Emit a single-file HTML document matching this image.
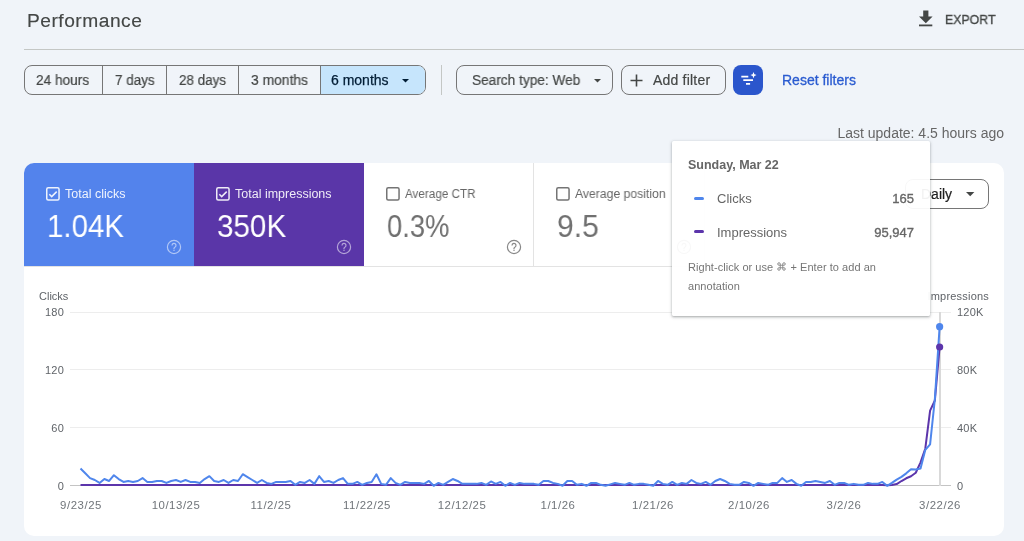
<!DOCTYPE html>
<html><head><meta charset="utf-8"><style>
html,body{margin:0;padding:0;}
body{width:1024px;height:541px;overflow:hidden;position:relative;background:#f0f4f9;font-family:"Liberation Sans", sans-serif;}
.t{position:absolute;white-space:nowrap;font-family:"Liberation Sans", sans-serif;will-change:transform;}
svg{overflow:visible}
</style></head><body>
<div class="t" style="left:27.30px;top:11.05px;font-size:19.2px;line-height:19.2px;color:#444746;font-weight:400;letter-spacing:0.5px;-webkit-text-stroke:0.15px #444746;">Performance</div>
<svg style="position:absolute;left:915px;top:6px" width="22" height="24" viewBox="0 0 22 24"><path d="M8.2 4.4h5.2v6.2h4.2L10.8 17.2 4.0 10.6h4.2z" fill="#444746"/><rect x="4" y="18.5" width="13.3" height="1.8" fill="#444746"/></svg>
<div class="t" style="left:944.50px;top:12.80px;font-size:13px;line-height:13px;color:#444746;font-weight:400;letter-spacing:0.1px;-webkit-text-stroke:0.35px #444746;transform:scaleX(0.94);transform-origin:0 0;">EXPORT</div>
<div style="position:absolute;left:24.00px;top:48.50px;width:1000.00px;height:1.00px;background:#c4c7c5"></div>
<div style="position:absolute;left:24px;top:65.1px;width:401.5px;height:30.3px;box-sizing:border-box;border:1px solid #767676;border-radius:8px;overflow:hidden"><div style="position:absolute;left:295.4px;top:0;right:0;bottom:0;background:#c6e5fc"></div><div style="position:absolute;left:76.5px;top:0;bottom:0;width:1px;background:#767676"></div><div style="position:absolute;left:141.1px;top:0;bottom:0;width:1px;background:#767676"></div><div style="position:absolute;left:213.2px;top:0;bottom:0;width:1px;background:#767676"></div><div style="position:absolute;left:294.9px;top:0;bottom:0;width:1px;background:#767676"></div></div>
<div class="t" style="left:36.30px;top:72.55px;font-size:14px;line-height:14px;color:#444746;font-weight:400;-webkit-text-stroke:0.2px #444746;transform:scaleX(0.975);transform-origin:0 0;">24 hours</div>
<div class="t" style="left:114.50px;top:72.55px;font-size:14px;line-height:14px;color:#444746;font-weight:400;-webkit-text-stroke:0.2px #444746;transform:scaleX(0.96);transform-origin:0 0;">7 days</div>
<div class="t" style="left:179.00px;top:72.55px;font-size:14px;line-height:14px;color:#444746;font-weight:400;-webkit-text-stroke:0.2px #444746;transform:scaleX(0.96);transform-origin:0 0;">28 days</div>
<div class="t" style="left:250.80px;top:72.55px;font-size:14px;line-height:14px;color:#444746;font-weight:400;-webkit-text-stroke:0.2px #444746;transform:scaleX(0.99);transform-origin:0 0;">3 months</div>
<div class="t" style="left:331.00px;top:72.55px;font-size:14px;line-height:14px;color:#001d35;font-weight:400;-webkit-text-stroke:0.25px #001d35;">6 months</div>
<svg style="position:absolute;left:401.70px;top:78.65px" width="7" height="3.5" viewBox="0 0 7 3.5"><path d="M0 0L7 0L3.5 3.5z" fill="#001d35"/></svg>
<div style="position:absolute;left:441.20px;top:65.20px;width:1.00px;height:30.30px;background:#c4c7c5"></div>
<div style="position:absolute;left:456.4px;top:65.1px;width:156.2px;height:30.3px;box-sizing:border-box;border:1px solid #767676;border-radius:8px"></div>
<div class="t" style="left:471.50px;top:72.55px;font-size:14px;line-height:14px;color:#444746;font-weight:400;-webkit-text-stroke:0.2px #444746;transform:scaleX(0.975);transform-origin:0 0;">Search type: Web</div>
<svg style="position:absolute;left:593.70px;top:78.65px" width="7" height="3.5" viewBox="0 0 7 3.5"><path d="M0 0L7 0L3.5 3.5z" fill="#444746"/></svg>
<div style="position:absolute;left:620.9px;top:65.1px;width:104.8px;height:30.3px;box-sizing:border-box;border:1px solid #767676;border-radius:8px"></div>
<svg style="position:absolute;left:630px;top:74px" width="13" height="13" viewBox="0 0 13 13"><path d="M6.5 0.5v12M0.5 6.5h12" stroke="#444746" stroke-width="1.6"/></svg>
<div class="t" style="left:653.00px;top:72.55px;font-size:14px;line-height:14px;color:#444746;font-weight:400;letter-spacing:0.2px;-webkit-text-stroke:0.2px #444746;">Add filter</div>
<div style="position:absolute;left:733px;top:65.2px;width:30.3px;height:29.8px;border-radius:8px;background:#2b56cc"></div>
<svg style="position:absolute;left:733px;top:65px" width="31" height="30" viewBox="0 0 31 30"><path d="M8.3 11.6h7M10.3 15.1h9.7M13 18.8h4.1" stroke="#fff" stroke-width="1.7"/><path d="M20.5 7l0.9 2.2 2.2 0.9 -2.2 0.9 -0.9 2.2 -0.9 -2.2 -2.2 -0.9 2.2 -0.9z" fill="#fff"/></svg>
<div class="t" style="left:782.00px;top:73.05px;font-size:14px;line-height:14px;color:#2a5bd0;font-weight:400;-webkit-text-stroke:0.3px #2a5bd0;">Reset filters</div>
<div class="t" style="left:404.00px;width:600px;text-align:right;top:125.75px;font-size:14px;line-height:14px;color:#666666;font-weight:400;">Last update: 4.5 hours ago</div>
<div style="position:absolute;left:24px;top:163.4px;width:980px;height:372.6px;background:#fff;border-radius:10px;overflow:hidden"><div style="position:absolute;left:0;top:0;width:170px;height:103.6px;background:#5383ec"></div><div style="position:absolute;left:170px;top:0;width:170px;height:103.6px;background:#5a36a8"></div><div style="position:absolute;left:0;top:103px;width:680px;height:1px;background:#e3e3e3"></div><div style="position:absolute;left:509px;top:0;width:1px;height:103px;background:#e3e3e3"></div><div style="position:absolute;left:679.5px;top:0;width:1px;height:103px;background:#e3e3e3"></div></div>
<svg style="position:absolute;left:46.0px;top:186.8px" width="14" height="14" viewBox="0 0 14 14"><rect x="0.75" y="0.75" width="12.3" height="12.3" rx="1.5" fill="none" stroke="rgba(255,255,255,0.9)" stroke-width="1.5"/><path d="M3.3 7.2l2.4 2.4 5-5" fill="none" stroke="rgba(255,255,255,0.9)" stroke-width="1.5"/></svg>
<div class="t" style="left:65.30px;top:188.02px;font-size:12.5px;line-height:12.5px;color:rgba(255,255,255,0.9);font-weight:400;transform:scaleX(1.0);transform-origin:0 0;">Total clicks</div>
<div class="t" style="left:47.00px;top:209.81px;font-size:32px;line-height:32px;color:#fff;font-weight:400;transform:scaleX(0.92);transform-origin:0 0;">1.04K</div>
<svg style="position:absolute;left:165.90px;top:239.10px" width="16" height="16" viewBox="0 0 16 16"><circle cx="8" cy="8" r="6.6" fill="none" stroke="rgba(255,255,255,0.55)" stroke-width="1.2"/><path d="M6 6.4a2 2 0 1 1 2.9 1.8c-0.6 0.3-0.9 0.7-0.9 1.3v0.4" fill="none" stroke="rgba(255,255,255,0.55)" stroke-width="1.2"/><circle cx="8" cy="11.3" r="0.75" fill="rgba(255,255,255,0.55)"/></svg>
<svg style="position:absolute;left:216.0px;top:186.8px" width="14" height="14" viewBox="0 0 14 14"><rect x="0.75" y="0.75" width="12.3" height="12.3" rx="1.5" fill="none" stroke="rgba(255,255,255,0.9)" stroke-width="1.5"/><path d="M3.3 7.2l2.4 2.4 5-5" fill="none" stroke="rgba(255,255,255,0.9)" stroke-width="1.5"/></svg>
<div class="t" style="left:235.30px;top:188.02px;font-size:12.5px;line-height:12.5px;color:rgba(255,255,255,0.9);font-weight:400;transform:scaleX(1.0);transform-origin:0 0;">Total impressions</div>
<div class="t" style="left:217.00px;top:209.81px;font-size:32px;line-height:32px;color:#fff;font-weight:400;transform:scaleX(0.925);transform-origin:0 0;">350K</div>
<svg style="position:absolute;left:335.90px;top:239.10px" width="16" height="16" viewBox="0 0 16 16"><circle cx="8" cy="8" r="6.6" fill="none" stroke="rgba(255,255,255,0.55)" stroke-width="1.2"/><path d="M6 6.4a2 2 0 1 1 2.9 1.8c-0.6 0.3-0.9 0.7-0.9 1.3v0.4" fill="none" stroke="rgba(255,255,255,0.55)" stroke-width="1.2"/><circle cx="8" cy="11.3" r="0.75" fill="rgba(255,255,255,0.55)"/></svg>
<svg style="position:absolute;left:386.0px;top:186.8px" width="14" height="14" viewBox="0 0 14 14"><rect x="0.75" y="0.75" width="12.3" height="12.3" rx="1.5" fill="none" stroke="#747474" stroke-width="1.5"/></svg>
<div class="t" style="left:405.30px;top:188.02px;font-size:12.5px;line-height:12.5px;color:#666666;font-weight:400;transform:scaleX(0.935);transform-origin:0 0;">Average CTR</div>
<div class="t" style="left:387.00px;top:209.81px;font-size:32px;line-height:32px;color:#707070;font-weight:400;transform:scaleX(0.855);transform-origin:0 0;">0.3%</div>
<svg style="position:absolute;left:505.90px;top:239.10px" width="16" height="16" viewBox="0 0 16 16"><circle cx="8" cy="8" r="6.6" fill="none" stroke="#888888" stroke-width="1.2"/><path d="M6 6.4a2 2 0 1 1 2.9 1.8c-0.6 0.3-0.9 0.7-0.9 1.3v0.4" fill="none" stroke="#888888" stroke-width="1.2"/><circle cx="8" cy="11.3" r="0.75" fill="#888888"/></svg>
<svg style="position:absolute;left:556.0px;top:186.8px" width="14" height="14" viewBox="0 0 14 14"><rect x="0.75" y="0.75" width="12.3" height="12.3" rx="1.5" fill="none" stroke="#747474" stroke-width="1.5"/></svg>
<div class="t" style="left:575.30px;top:188.02px;font-size:12.5px;line-height:12.5px;color:#666666;font-weight:400;transform:scaleX(0.975);transform-origin:0 0;">Average position</div>
<div class="t" style="left:557.00px;top:209.81px;font-size:32px;line-height:32px;color:#707070;font-weight:400;transform:scaleX(0.94);transform-origin:0 0;">9.5</div>
<svg style="position:absolute;left:675.90px;top:239.10px" width="16" height="16" viewBox="0 0 16 16"><circle cx="8" cy="8" r="6.6" fill="none" stroke="#888888" stroke-width="1.2"/><path d="M6 6.4a2 2 0 1 1 2.9 1.8c-0.6 0.3-0.9 0.7-0.9 1.3v0.4" fill="none" stroke="#888888" stroke-width="1.2"/><circle cx="8" cy="11.3" r="0.75" fill="#888888"/></svg>
<div style="position:absolute;left:905.3px;top:178.5px;width:83.4px;height:30.3px;box-sizing:border-box;border:1px solid #767676;border-radius:8px"></div>
<div class="t" style="left:921.30px;top:186.75px;font-size:14px;line-height:14px;color:#1f1f1f;font-weight:400;-webkit-text-stroke:0.2px #1f1f1f;">Daily</div>
<svg style="position:absolute;left:965.90px;top:191.90px" width="8.4" height="4.2" viewBox="0 0 8.4 4.2"><path d="M0 0L8.4 0L4.2 4.2z" fill="#444746"/></svg>
<div class="t" style="left:-535.80px;width:600px;text-align:right;top:480.79px;font-size:11px;line-height:11px;color:#5f6368;font-weight:400;letter-spacing:0.2px;">0</div>
<div style="position:absolute;left:70.00px;top:427.23px;width:881.00px;height:1.00px;background:#ededed"></div>
<div class="t" style="left:-535.80px;width:600px;text-align:right;top:422.92px;font-size:11px;line-height:11px;color:#5f6368;font-weight:400;letter-spacing:0.2px;">60</div>
<div style="position:absolute;left:70.00px;top:369.37px;width:881.00px;height:1.00px;background:#ededed"></div>
<div class="t" style="left:-535.80px;width:600px;text-align:right;top:365.06px;font-size:11px;line-height:11px;color:#5f6368;font-weight:400;letter-spacing:0.2px;">120</div>
<div style="position:absolute;left:70.00px;top:311.50px;width:881.00px;height:1.00px;background:#ededed"></div>
<div class="t" style="left:-535.80px;width:600px;text-align:right;top:307.19px;font-size:11px;line-height:11px;color:#5f6368;font-weight:400;letter-spacing:0.2px;">180</div>
<div class="t" style="left:957.30px;top:480.59px;font-size:11px;line-height:11px;color:#5f6368;font-weight:400;letter-spacing:0.2px;">0</div>
<div class="t" style="left:957.30px;top:422.72px;font-size:11px;line-height:11px;color:#5f6368;font-weight:400;letter-spacing:0.2px;">40K</div>
<div class="t" style="left:957.30px;top:364.86px;font-size:11px;line-height:11px;color:#5f6368;font-weight:400;letter-spacing:0.2px;">80K</div>
<div class="t" style="left:957.30px;top:306.99px;font-size:11px;line-height:11px;color:#5f6368;font-weight:400;letter-spacing:0.2px;">120K</div>
<div style="position:absolute;left:70.00px;top:485.30px;width:881.00px;height:1.00px;background:#c4c4c4"></div>
<div class="t" style="left:38.50px;top:290.69px;font-size:11px;line-height:11px;color:#5f6368;font-weight:400;">Clicks</div>
<div class="t" style="left:388.60px;width:600px;text-align:right;top:290.79px;font-size:11px;line-height:11px;color:#5f6368;font-weight:400;letter-spacing:0.2px;">Impressions</div>
<div class="t" style="left:-219.50px;width:600px;text-align:center;top:499.55px;font-size:11.4px;line-height:11.4px;color:#70757a;font-weight:400;letter-spacing:0.55px;">9/23/25</div>
<div class="t" style="left:-124.04px;width:600px;text-align:center;top:499.55px;font-size:11.4px;line-height:11.4px;color:#70757a;font-weight:400;letter-spacing:0.55px;">10/13/25</div>
<div class="t" style="left:-28.58px;width:600px;text-align:center;top:499.55px;font-size:11.4px;line-height:11.4px;color:#70757a;font-weight:400;letter-spacing:0.55px;">11/2/25</div>
<div class="t" style="left:66.88px;width:600px;text-align:center;top:499.55px;font-size:11.4px;line-height:11.4px;color:#70757a;font-weight:400;letter-spacing:0.55px;">11/22/25</div>
<div class="t" style="left:162.34px;width:600px;text-align:center;top:499.55px;font-size:11.4px;line-height:11.4px;color:#70757a;font-weight:400;letter-spacing:0.55px;">12/12/25</div>
<div class="t" style="left:257.80px;width:600px;text-align:center;top:499.55px;font-size:11.4px;line-height:11.4px;color:#70757a;font-weight:400;letter-spacing:0.55px;">1/1/26</div>
<div class="t" style="left:353.26px;width:600px;text-align:center;top:499.55px;font-size:11.4px;line-height:11.4px;color:#70757a;font-weight:400;letter-spacing:0.55px;">1/21/26</div>
<div class="t" style="left:448.72px;width:600px;text-align:center;top:499.55px;font-size:11.4px;line-height:11.4px;color:#70757a;font-weight:400;letter-spacing:0.55px;">2/10/26</div>
<div class="t" style="left:544.18px;width:600px;text-align:center;top:499.55px;font-size:11.4px;line-height:11.4px;color:#70757a;font-weight:400;letter-spacing:0.55px;">3/2/26</div>
<div class="t" style="left:639.64px;width:600px;text-align:center;top:499.55px;font-size:11.4px;line-height:11.4px;color:#70757a;font-weight:400;letter-spacing:0.55px;">3/22/26</div>
<div style="position:absolute;left:939.10px;top:311.80px;width:1.80px;height:174.00px;background:#d9d9d9"></div>
<svg style="position:absolute;left:0;top:0" width="1024" height="541"><path d="M80.50,485.08 L85.27,485.08 L90.05,485.08 L94.82,485.08 L99.59,485.08 L104.36,485.08 L109.14,485.08 L113.91,485.08 L118.68,485.08 L123.46,485.08 L128.23,485.08 L133.00,485.08 L137.78,485.08 L142.55,485.08 L147.32,485.08 L152.09,485.08 L156.87,485.08 L161.64,485.08 L166.41,485.08 L171.19,485.08 L175.96,485.08 L180.73,485.08 L185.51,485.08 L190.28,485.08 L195.05,485.08 L199.82,485.08 L204.60,485.08 L209.37,485.08 L214.14,485.08 L218.92,485.08 L223.69,485.08 L228.46,485.08 L233.24,485.08 L238.01,485.08 L242.78,485.08 L247.55,485.08 L252.33,485.08 L257.10,485.08 L261.87,485.08 L266.65,485.08 L271.42,485.08 L276.19,485.08 L280.97,485.08 L285.74,485.08 L290.51,485.08 L295.28,485.08 L300.06,485.08 L304.83,485.08 L309.60,485.08 L314.38,485.08 L319.15,485.08 L323.92,485.08 L328.70,485.08 L333.47,485.08 L338.24,485.08 L343.01,485.08 L347.79,485.08 L352.56,485.08 L357.33,485.08 L362.11,485.08 L366.88,485.08 L371.65,485.08 L376.43,485.08 L381.20,485.08 L385.97,485.08 L390.75,485.08 L395.52,485.08 L400.29,485.08 L405.06,485.08 L409.84,485.08 L414.61,485.08 L419.38,485.08 L424.16,485.08 L428.93,485.08 L433.70,485.08 L438.47,485.08 L443.25,485.08 L448.02,485.08 L452.79,485.08 L457.57,485.08 L462.34,485.08 L467.11,485.08 L471.89,485.08 L476.66,485.08 L481.43,485.08 L486.20,485.08 L490.98,485.08 L495.75,485.08 L500.52,485.08 L505.30,485.08 L510.07,485.08 L514.84,485.08 L519.62,485.08 L524.39,485.08 L529.16,485.08 L533.93,485.08 L538.71,485.08 L543.48,485.08 L548.25,485.08 L553.03,485.08 L557.80,485.08 L562.57,485.08 L567.35,485.08 L572.12,485.08 L576.89,485.08 L581.66,485.08 L586.44,485.08 L591.21,485.08 L595.98,485.08 L600.76,485.08 L605.53,485.08 L610.30,485.08 L615.08,485.08 L619.85,485.08 L624.62,485.08 L629.39,485.08 L634.17,485.08 L638.94,485.08 L643.71,485.08 L648.49,485.08 L653.26,485.08 L658.03,485.08 L662.81,485.08 L667.58,485.08 L672.35,485.08 L677.12,485.08 L681.90,485.08 L686.67,485.08 L691.44,485.08 L696.22,485.08 L700.99,485.08 L705.76,485.08 L710.54,485.08 L715.31,485.08 L720.08,485.08 L724.85,485.08 L729.63,485.08 L734.40,485.08 L739.17,485.08 L743.95,485.08 L748.72,485.08 L753.49,485.08 L758.27,485.08 L763.04,485.08 L767.81,485.08 L772.58,485.08 L777.36,485.08 L782.13,485.08 L786.90,485.08 L791.68,485.08 L796.45,485.08 L801.22,485.08 L806.00,485.08 L810.77,485.08 L815.54,485.08 L820.31,485.08 L825.09,485.08 L829.86,485.08 L834.63,485.08 L839.41,485.08 L844.18,485.08 L848.95,485.08 L853.73,485.08 L858.50,485.08 L863.27,485.08 L868.04,485.08 L872.82,485.08 L877.59,485.08 L882.36,485.08 L887.14,485.22 L891.91,484.93 L896.68,484.06 L901.46,481.03 L906.23,478.28 L911.00,476.25 L915.77,472.78 L920.55,462.36 L925.32,448.48 L930.09,410.57 L934.87,400.45 L939.64,347.00" fill="none" stroke="#5c35ab" stroke-width="2" stroke-linejoin="round"/><path d="M80.50,468.44 L85.27,473.26 L90.05,478.08 L94.82,480.01 L99.59,482.91 L104.36,479.05 L109.14,480.98 L113.91,475.19 L118.68,479.05 L123.46,481.94 L128.23,480.98 L133.00,481.94 L137.78,480.98 L142.55,478.08 L147.32,481.94 L152.09,481.94 L156.87,480.98 L161.64,480.98 L166.41,482.91 L171.19,480.98 L175.96,480.01 L180.73,481.94 L185.51,480.01 L190.28,481.94 L195.05,481.94 L199.82,482.91 L204.60,479.05 L209.37,476.16 L214.14,480.98 L218.92,481.94 L223.69,480.01 L228.46,482.91 L233.24,480.01 L238.01,480.98 L242.78,474.23 L247.55,477.12 L252.33,480.01 L257.10,482.91 L261.87,480.01 L266.65,482.91 L271.42,483.87 L276.19,481.94 L280.97,481.94 L285.74,481.94 L290.51,480.98 L295.28,484.84 L300.06,481.94 L304.83,482.91 L309.60,480.01 L314.38,483.87 L319.15,476.16 L323.92,481.94 L328.70,480.98 L333.47,482.91 L338.24,480.01 L343.01,478.08 L347.79,483.87 L352.56,483.87 L357.33,481.94 L362.11,484.84 L366.88,482.91 L371.65,481.94 L376.43,474.23 L381.20,483.87 L385.97,484.84 L390.75,478.08 L395.52,482.91 L400.29,484.84 L405.06,481.94 L409.84,482.91 L414.61,482.91 L419.38,482.91 L424.16,483.87 L428.93,480.98 L433.70,485.80 L438.47,482.91 L443.25,484.84 L448.02,481.94 L452.79,479.05 L457.57,480.98 L462.34,483.87 L467.11,483.87 L471.89,483.87 L476.66,483.87 L481.43,482.91 L486.20,484.84 L490.98,481.46 L495.75,483.87 L500.52,481.94 L505.30,485.80 L510.07,482.91 L514.84,484.84 L519.62,482.91 L524.39,483.87 L529.16,483.87 L533.93,483.87 L538.71,484.84 L543.48,480.98 L548.25,480.98 L553.03,482.91 L557.80,483.87 L562.57,485.80 L567.35,480.98 L572.12,480.98 L576.89,484.84 L581.66,483.87 L586.44,485.80 L591.21,482.91 L595.98,482.91 L600.76,484.84 L605.53,485.80 L610.30,484.35 L615.08,482.91 L619.85,483.87 L624.62,484.84 L629.39,482.91 L634.17,484.84 L638.94,483.87 L643.71,483.87 L648.49,484.84 L653.26,485.80 L658.03,480.98 L662.81,483.87 L667.58,484.84 L672.35,481.94 L677.12,484.84 L681.90,482.91 L686.67,483.87 L691.44,480.01 L696.22,482.91 L700.99,483.87 L705.76,481.94 L710.54,484.84 L715.31,480.98 L720.08,479.05 L724.85,480.98 L729.63,483.87 L734.40,484.84 L739.17,484.84 L743.95,481.94 L748.72,482.91 L753.49,485.80 L758.27,482.91 L763.04,483.87 L767.81,484.84 L772.58,482.91 L777.36,482.91 L782.13,478.08 L786.90,481.94 L791.68,480.01 L796.45,483.87 L801.22,485.80 L806.00,481.94 L810.77,481.94 L815.54,480.98 L820.31,481.94 L825.09,482.91 L829.86,480.98 L834.63,484.84 L839.41,482.91 L844.18,482.91 L848.95,484.84 L853.73,483.87 L858.50,484.84 L863.27,484.84 L868.04,482.91 L872.82,483.87 L877.59,483.87 L882.36,481.94 L887.14,485.80 L891.91,482.91 L896.68,479.63 L901.46,476.83 L906.23,473.36 L911.00,469.21 L915.77,469.40 L920.55,468.44 L925.32,449.83 L930.09,444.33 L934.87,399.00 L939.64,326.67" fill="none" stroke="#4f86ec" stroke-width="2" stroke-linejoin="round"/><circle cx="939.64" cy="326.67" r="3.6" fill="#4f86ec"/><circle cx="939.64" cy="347.00" r="3.6" fill="#5c35ab"/></svg>
<div style="position:absolute;left:672.2px;top:140.7px;width:257.6px;height:175.6px;background:rgba(255,255,255,0.94);border-radius:2px;box-shadow:0 1px 2px rgba(60,64,67,0.3),0 1px 3px 1px rgba(60,64,67,0.15);"></div>
<div class="t" style="left:687.60px;top:158.62px;font-size:12.5px;line-height:12.5px;color:#666666;font-weight:700;">Sunday, Mar 22</div>
<div style="position:absolute;left:694.40px;top:196.90px;width:10.00px;height:3.00px;background:#4f86ec;border-radius:2px"></div>
<div style="position:absolute;left:694.40px;top:229.90px;width:10.00px;height:3.00px;background:#5c35ab;border-radius:2px"></div>
<div class="t" style="left:716.50px;top:192.00px;font-size:13px;line-height:13px;color:#666666;font-weight:400;">Clicks</div>
<div class="t" style="left:716.50px;top:225.90px;font-size:13px;line-height:13px;color:#666666;font-weight:400;">Impressions</div>
<div class="t" style="left:314.00px;width:600px;text-align:right;top:192.30px;font-size:13px;line-height:13px;color:#666666;font-weight:400;-webkit-text-stroke:0.35px #666666;">165</div>
<div class="t" style="left:314.00px;width:600px;text-align:right;top:226.20px;font-size:13px;line-height:13px;color:#666666;font-weight:400;-webkit-text-stroke:0.35px #666666;">95,947</div>
<div class="t" style="left:687.60px;top:262.29px;font-size:11px;line-height:11px;color:#757575;font-weight:400;letter-spacing:0.05px;">Right-click or use <svg width="9" height="9" viewBox="0 0 10 10" style="display:inline-block;vertical-align:0px;margin:0 1px 0 1px;overflow:visible"><path d="M3.6 3.6h2.8v2.8h-2.8z M3.6 3.6v-1.4a1.4 1.4 0 1 0 -1.4 1.4h1.4 M6.4 3.6h1.4a1.4 1.4 0 1 0 -1.4 -1.4v1.4 M6.4 6.4v1.4a1.4 1.4 0 1 0 1.4 -1.4h-1.4 M3.6 6.4h-1.4a1.4 1.4 0 1 0 1.4 1.4v-1.4" fill="none" stroke="#757575" stroke-width="0.9"/></svg> + Enter to add an</div>
<div class="t" style="left:687.60px;top:280.89px;font-size:11px;line-height:11px;color:#757575;font-weight:400;letter-spacing:0.05px;">annotation</div>
</body></html>
